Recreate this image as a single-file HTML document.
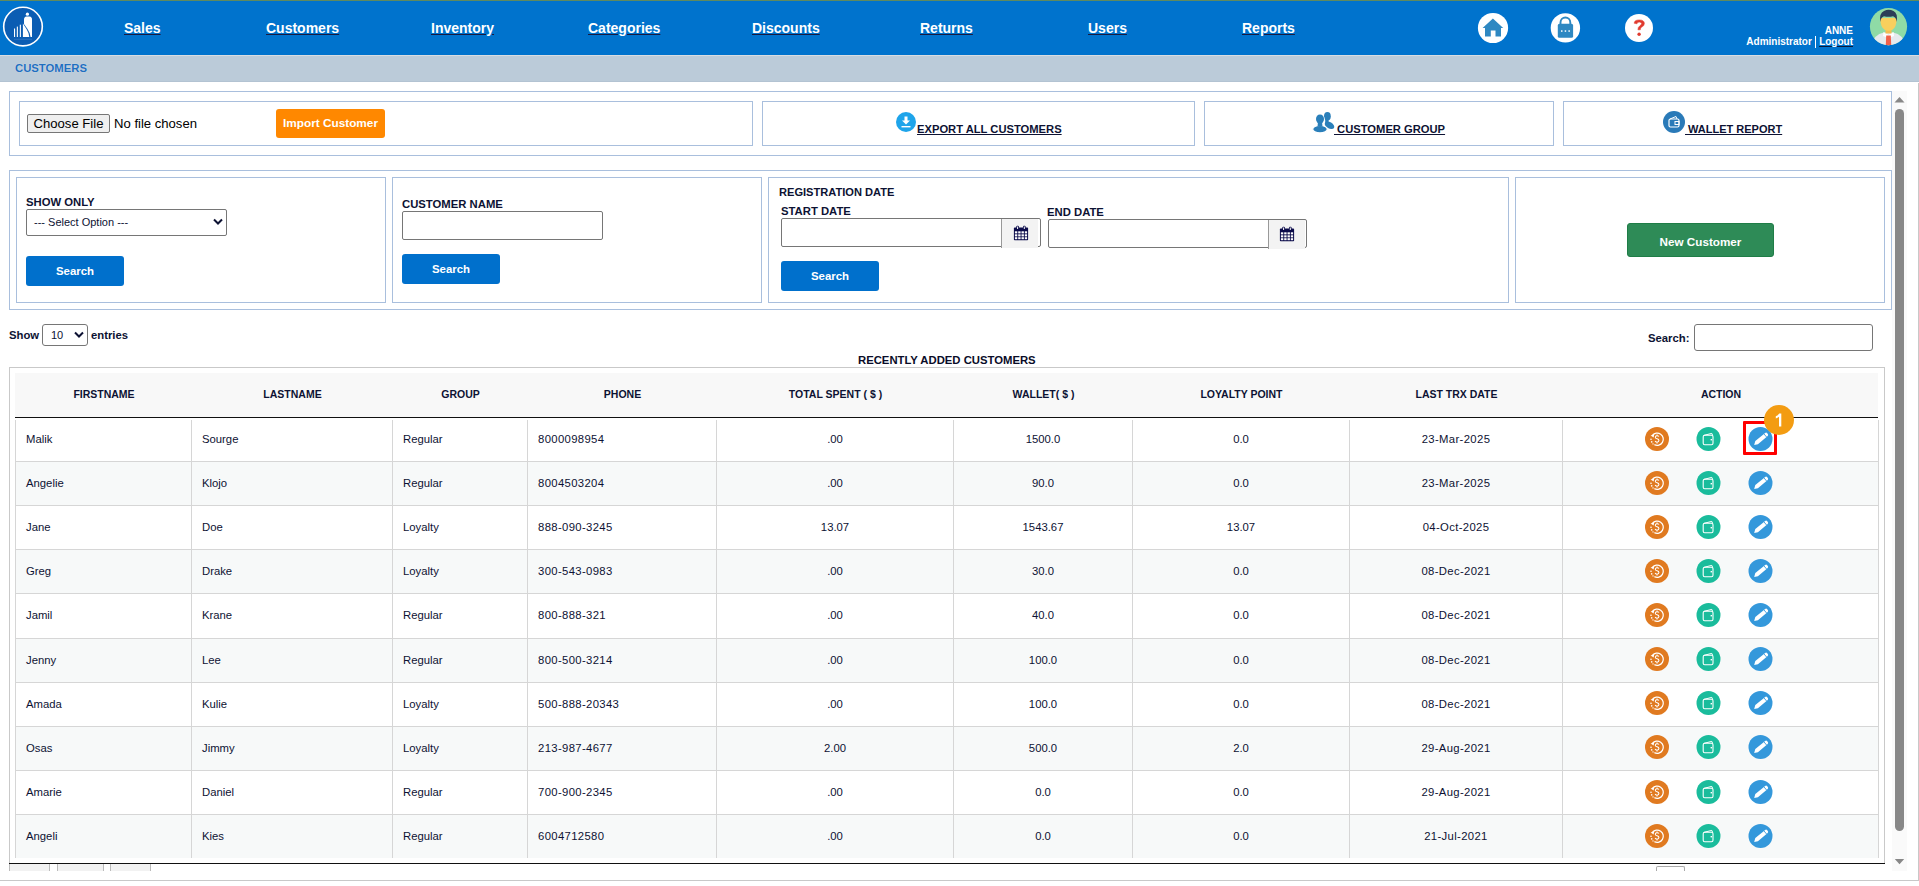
<!DOCTYPE html>
<html><head><meta charset="utf-8">
<style>
*{box-sizing:border-box;margin:0;padding:0}
html,body{width:1919px;height:886px;overflow:hidden;background:#fff;font-family:"Liberation Sans",sans-serif;color:#0d1233}
.a{position:absolute}
#topline{left:0;top:0;width:1919px;height:1px;background:#5f8a5e}
#nav{left:0;top:1px;width:1919px;height:54px;background:#0073cd}
.nv{position:absolute;top:20px;font-size:14px;font-weight:bold;color:#fff;text-decoration:underline;text-decoration-color:#1a1a40;white-space:nowrap;line-height:16px}
#crumb{left:0;top:55px;width:1919px;height:27px;background:#bbcbd9;border-top:1px solid #d9dde2;border-bottom:1px solid #b3c3d2}
#crumb span{position:absolute;left:15px;top:6px;font-size:11.3px;font-weight:bold;color:#1f6fc0;line-height:13px;text-shadow:0 0 1px rgba(255,255,255,0.6)}
.bx{position:absolute;border:1px solid #a9bfdd;background:#fff}
.lbl{position:absolute;font-weight:bold;font-size:11.3px;line-height:13px;white-space:nowrap;color:#0d1233}
.btnb{position:absolute;background:#0070cc;color:#fff;font-weight:bold;font-size:11.4px;border-radius:3px;text-align:center}
.inp{position:absolute;border:1px solid #767676;border-radius:2px;background:#fff}
.th{position:absolute;top:388px;width:200px;text-align:center;font-weight:bold;font-size:10.5px;line-height:13px;color:#0d1233;white-space:nowrap}
.td{position:absolute;font-size:11.3px;line-height:14px;color:#0d1233;white-space:nowrap}
.tc{width:200px;text-align:center}
.lnk{position:absolute;font-weight:bold;font-size:11.2px;text-decoration:underline;color:#0d1233;white-space:nowrap;line-height:13px}
</style></head><body>
<div id="topline" class="a"></div>
<div id="nav" class="a"></div>
<!-- logo -->
<svg class="a" style="left:0;top:0" width="48" height="50" viewBox="0 0 48 50">
 <circle cx="23" cy="26.6" r="19.3" fill="#0b5db3" stroke="#fff" stroke-width="1.6"/>
 <circle cx="27.4" cy="14.2" r="1.6" fill="#fff"/>
 <path d="M24 37 L24 19.5 Q24 16.6 26.5 16.4 L29.5 16.4 Q32 16.6 32 19.5 L32 37 Z" fill="#fff"/>
 <path d="M22.2 21.8 L22.2 37 L30.5 37 Q30.3 33 27.5 29 Q24 24 22.2 21.8 Z" fill="#0b5db3"/>
 <path d="M22.9 23.5 Q24.5 26 26.5 29 Q29 33 29.3 37 L22.9 37 Z" fill="#fff"/>
 <rect x="14" y="28.5" width="1.1" height="8.5" fill="#fff"/>
 <rect x="16.8" y="26.6" width="1.1" height="10.4" fill="#fff"/>
 <rect x="19.8" y="24.7" width="1.1" height="12.3" fill="#fff"/>
 <rect x="14" y="38.8" width="18" height="1" fill="#5b8fd0" opacity="0.4"/>
</svg>
<div class="nv" style="left:124px">Sales</div>
<div class="nv" style="left:266px">Customers</div>
<div class="nv" style="left:431px">Inventory</div>
<div class="nv" style="left:588px">Categories</div>
<div class="nv" style="left:752px">Discounts</div>
<div class="nv" style="left:920px">Returns</div>
<div class="nv" style="left:1088px">Users</div>
<div class="nv" style="left:1242px">Reports</div>
<!-- right icons -->
<svg class="a" style="left:1470px;top:5px" width="190" height="45" viewBox="1470 5 190 45">
 <circle cx="1493" cy="28" r="15.1" fill="#fff"/>
 <path d="M1492.9 18.5 L1482.6 27.9 L1485 27.9 L1485 36.5 L1490.8 36.5 L1490.8 30.5 L1495.5 30.5 L1495.5 36.5 L1501 36.5 L1501 27.9 L1503.2 27.9 Z" fill="#2e88c2"/>
 <circle cx="1565.4" cy="27.9" r="14.7" fill="#fff"/>
 <path d="M1560.5 24 L1560.5 22.4 A4.9 4.9 0 0 1 1570.3 22.4 L1570.3 24" fill="none" stroke="#2e88c2" stroke-width="1.9"/>
 <rect x="1557.8" y="23.8" width="15.3" height="14" rx="1.6" fill="#2e88c2"/>
 <rect x="1561" y="30.3" width="1.5" height="1.5" fill="#fff"/><rect x="1564.7" y="30.3" width="1.5" height="1.5" fill="#fff"/><rect x="1568.4" y="30.3" width="1.5" height="1.5" fill="#fff"/>
 <circle cx="1639" cy="28" r="14" fill="#fff"/>
 <path d="M1634.2 23.3 Q1634.2 19.9 1639.2 19.9 Q1644.4 19.9 1644.4 23.6 Q1644.4 25.8 1641.8 27.1 Q1640.3 27.9 1640.3 29.8 L1637.9 29.8 Q1637.8 27 1639.9 25.7 Q1641.6 24.7 1641.6 23.6 Q1641.6 22.1 1639.2 22.1 Q1637 22.1 1637 23.8 Z" fill="#e03a2e" stroke="#e03a2e" stroke-width="0.5"/>
 <circle cx="1639.1" cy="34.3" r="1.7" fill="#e03a2e"/>
</svg>
<div class="a" style="right:66px;top:25px;font-size:10px;font-weight:bold;color:#fff;text-align:right;line-height:11.3px;white-space:nowrap">ANNE<br>Administrator <span style="display:inline-block;width:1.7px;height:12px;background:#fff;vertical-align:-3px"></span> <u style="text-decoration-color:#0a1a3a">Logout</u></div>
<svg class="a" style="left:1868px;top:6px" width="42" height="42" viewBox="1868 6 42 42">
 <defs><clipPath id="av"><circle cx="1888.5" cy="26.6" r="18.6"/></clipPath></defs>
 <circle cx="1888.5" cy="26.6" r="18.6" fill="#8fdba6"/>
 <g clip-path="url(#av)">
  <path d="M1871 47 Q1873 34.5 1884 32.5 L1893 32.5 Q1904 34.5 1906 47 Z" fill="#e6eaee"/>
  <path d="M1883.5 32 L1888.5 35 L1893.5 32 L1894 36 L1888.5 38 L1883 36 Z" fill="#ffffff"/>
  <rect x="1885.5" y="28" width="6" height="5.5" fill="#f4bd52"/>
  <path d="M1886.2 35.5 L1890.8 35.5 L1891.3 47 L1885.7 47 Z" fill="#f0604a"/>
  <path d="M1880.3 18 Q1880.3 30.5 1888.5 30.8 Q1896.7 30.5 1896.7 18 Z" fill="#f8cf5d"/>
  <path d="M1880.3 22 Q1879 13 1884 11 Q1888.5 8.6 1893.5 11 Q1898 13 1896.7 22 Q1896 17 1893 16.2 Q1888.5 17.5 1884 16.2 Q1881 17 1880.3 22 Z" fill="#2b3d57"/>
 </g>
</svg>

<div id="crumb" class="a"><span>CUSTOMERS</span></div>

<!-- scroll frame -->
<div class="a" style="left:0;top:83px;width:1919px;height:798px;border-right:1px solid #c8c8c8;border-bottom:1px solid #c8c8c8"></div>

<!-- row 1 -->
<div class="bx" style="left:9px;top:91px;width:1883px;height:65px"></div>
<div class="bx" style="left:19px;top:101px;width:734px;height:45px"></div>
<div class="bx" style="left:762px;top:101px;width:433px;height:45px"></div>
<div class="bx" style="left:1204px;top:101px;width:350px;height:45px"></div>
<div class="bx" style="left:1563px;top:101px;width:319px;height:45px"></div>

<div class="a" style="left:27px;top:114px;width:83px;height:19px;border:1px solid #767676;border-radius:2px;background:#efefef;font-size:13.1px;line-height:17px;text-align:center;color:#000">Choose File</div>
<div class="a" style="left:114px;top:115px;font-size:13.1px;line-height:17px;color:#000">No file chosen</div>
<div class="a" style="left:276px;top:109px;width:109px;height:29px;background:#ff8800;border-radius:3px;color:#fff;font-weight:bold;font-size:11.8px;line-height:29px;text-align:center">Import Customer</div>

<svg class="a" style="left:896px;top:112px" width="20" height="20" viewBox="0 0 20 20"><circle cx="10" cy="10" r="10" fill="#1ea4ea"/><path d="M8.5 4.5 h3 v4 h2.5 l-4 4 l-4 -4 h2.5 z" fill="#fff"/><rect x="5.5" y="14" width="9" height="1.4" fill="#fff"/></svg>
<div class="lnk" style="left:917px;top:123px">EXPORT ALL CUSTOMERS</div>

<svg class="a" style="left:1310px;top:108px" width="28" height="28" viewBox="1310 108 28 28">
 <ellipse cx="1327.4" cy="116.2" rx="3.4" ry="4.3" fill="#2a7fba"/>
 <ellipse cx="1329.5" cy="125.3" rx="5.2" ry="3.2" transform="rotate(30 1329.5 125.3)" fill="#2a7fba"/>
 <rect x="1325.2" y="118" width="3.4" height="6" fill="#2a7fba"/>
 <g stroke="#fff" stroke-width="1.3">
 <ellipse cx="1320" cy="119" rx="4" ry="4.6" fill="#2a7fba"/>
 <ellipse cx="1320" cy="129.2" rx="7.3" ry="3.8" fill="#2a7fba"/>
 </g>
 <ellipse cx="1320" cy="119" rx="4" ry="4.6" fill="#2a7fba"/>
 <path d="M1318 122 L1322 122 L1322.5 126.5 L1317.5 126.5 Z" fill="#2a7fba"/>
</svg>
<div class="lnk" style="left:1334px;top:123px">&nbsp;CUSTOMER GROUP</div>

<svg class="a" style="left:1663px;top:111px" width="22" height="22" viewBox="0 0 22 22"><circle cx="11" cy="11" r="11" fill="#2a7ab8"/><rect x="6" y="8" width="10" height="8" rx="1.5" fill="none" stroke="#fff" stroke-width="1.2"/><path d="M7 8 L13 5.5 L14 8" fill="none" stroke="#fff" stroke-width="1"/><rect x="12" y="10.5" width="4" height="3" fill="none" stroke="#fff" stroke-width="1"/></svg>
<div class="lnk" style="left:1685px;top:123px;font-size:11px">&nbsp;WALLET REPORT</div>

<!-- row 2 -->
<div class="bx" style="left:9px;top:170px;width:1883px;height:140px"></div>
<div class="bx" style="left:16px;top:177px;width:370px;height:126px"></div>
<div class="bx" style="left:392px;top:177px;width:370px;height:126px"></div>
<div class="bx" style="left:768px;top:177px;width:741px;height:126px"></div>
<div class="bx" style="left:1515px;top:177px;width:370px;height:126px"></div>

<div class="lbl" style="left:26px;top:196px">SHOW ONLY</div>
<div class="inp" style="left:26px;top:209px;width:201px;height:27px"></div>
<div class="a" style="left:34px;top:216px;font-size:11px;line-height:13px;color:#0d1233">--- Select Option ---</div>
<svg class="a" style="left:213px;top:218px" width="10" height="8" viewBox="0 0 10 8"><path d="M1 1.5 L5 5.5 L9 1.5" fill="none" stroke="#0d1233" stroke-width="2"/></svg>
<div class="btnb" style="left:26px;top:256px;width:98px;height:30px;line-height:30px">Search</div>

<div class="lbl" style="left:402px;top:198px">CUSTOMER NAME</div>
<div class="inp" style="left:402px;top:211px;width:201px;height:29px"></div>
<div class="btnb" style="left:402px;top:254px;width:98px;height:30px;line-height:30px">Search</div>

<div class="lbl" style="left:779px;top:186px;font-size:11.1px">REGISTRATION DATE</div>
<div class="lbl" style="left:781px;top:205px">START DATE</div>
<div class="inp" style="left:781px;top:218px;width:260px;height:29px"></div>
<div class="a" style="left:1001px;top:219px;width:37px;height:29px;background:#f3f3f3;border-left:1px solid #999"></div>
<div class="lbl" style="left:1047px;top:206px">END DATE</div>
<div class="inp" style="left:1048px;top:219px;width:259px;height:29px"></div>
<div class="a" style="left:1268px;top:220px;width:37px;height:29px;background:#f3f3f3;border-left:1px solid #999"></div>
<svg class="a" style="left:1013px;top:225px" width="16" height="16" viewBox="0 0 16 16"><rect x="0.9" y="2.6" width="14.2" height="12.6" rx="0.8" fill="#0b0b4a"/><g fill="#fff"><rect x="1.9" y="6.3" width="2.4" height="2.1"/><rect x="5.2" y="6.3" width="2.4" height="2.1"/><rect x="8.5" y="6.3" width="2.4" height="2.1"/><rect x="11.8" y="6.3" width="2.3" height="2.1"/><rect x="1.9" y="9.3" width="2.4" height="2.1"/><rect x="5.2" y="9.3" width="2.4" height="2.1"/><rect x="8.5" y="9.3" width="2.4" height="2.1"/><rect x="11.8" y="9.3" width="2.3" height="2.1"/><rect x="1.9" y="12.2" width="2.4" height="2"/><rect x="5.2" y="12.2" width="2.4" height="2"/><rect x="8.5" y="12.2" width="2.4" height="2"/><rect x="11.8" y="12.2" width="2.3" height="2"/></g><rect x="3.3" y="0.7" width="2.6" height="3.6" rx="1" fill="#0b0b4a"/><rect x="10" y="0.7" width="2.6" height="3.6" rx="1" fill="#0b0b4a"/><rect x="4.1" y="1.5" width="1" height="2.5" fill="#fff"/><rect x="10.8" y="1.5" width="1" height="2.5" fill="#fff"/></svg>
<svg class="a" style="left:1279px;top:226px" width="16" height="16" viewBox="0 0 16 16"><rect x="0.9" y="2.6" width="14.2" height="12.6" rx="0.8" fill="#0b0b4a"/><g fill="#fff"><rect x="1.9" y="6.3" width="2.4" height="2.1"/><rect x="5.2" y="6.3" width="2.4" height="2.1"/><rect x="8.5" y="6.3" width="2.4" height="2.1"/><rect x="11.8" y="6.3" width="2.3" height="2.1"/><rect x="1.9" y="9.3" width="2.4" height="2.1"/><rect x="5.2" y="9.3" width="2.4" height="2.1"/><rect x="8.5" y="9.3" width="2.4" height="2.1"/><rect x="11.8" y="9.3" width="2.3" height="2.1"/><rect x="1.9" y="12.2" width="2.4" height="2"/><rect x="5.2" y="12.2" width="2.4" height="2"/><rect x="8.5" y="12.2" width="2.4" height="2"/><rect x="11.8" y="12.2" width="2.3" height="2"/></g><rect x="3.3" y="0.7" width="2.6" height="3.6" rx="1" fill="#0b0b4a"/><rect x="10" y="0.7" width="2.6" height="3.6" rx="1" fill="#0b0b4a"/><rect x="4.1" y="1.5" width="1" height="2.5" fill="#fff"/><rect x="10.8" y="1.5" width="1" height="2.5" fill="#fff"/></svg>
<div class="btnb" style="left:781px;top:261px;width:98px;height:30px;line-height:30px">Search</div>

<div class="a" style="left:1627px;top:223px;width:147px;height:34px;background:#2e8b57;border:1px solid #1f7d47;border-radius:3px;color:#fff;font-weight:bold;font-size:11.7px;line-height:33px;padding-top:1px;text-align:center">New Customer</div>

<!-- datatable controls -->
<div class="lbl" style="left:9px;top:329px">Show</div>
<div class="inp" style="left:42px;top:324px;width:46px;height:22px;border-radius:3px"></div>
<div class="a" style="left:51px;top:329px;font-size:11px;line-height:13px">10</div>
<svg class="a" style="left:74px;top:331px" width="10" height="8" viewBox="0 0 10 8"><path d="M1 1.5 L5 5.5 L9 1.5" fill="none" stroke="#0d1233" stroke-width="2"/></svg>
<div class="lbl" style="left:91px;top:329px">entries</div>
<div class="lbl" style="left:1648px;top:332px">Search:</div>
<div class="inp" style="left:1694px;top:324px;width:179px;height:27px;border-radius:3px"></div>
<div class="lbl" style="left:858px;top:354px;color:#0a0c28">RECENTLY ADDED CUSTOMERS</div>

<svg width="0" height="0" style="position:absolute">
<defs>
<symbol id="ic-refund" viewBox="0 0 24 24"><circle cx="12" cy="12" r="12" fill="#e07a20"/><path d="M7.4 8.4 A6.1 6.1 0 1 1 9.4 17.6" fill="none" stroke="#fff" stroke-width="1.25"/><path d="M5.6 8.6 L9.2 7.2 L8.6 10.6 Z" fill="#fff"/><circle cx="6" cy="12.3" r="0.8" fill="#fff"/><circle cx="6.7" cy="14.9" r="0.8" fill="#fff"/><circle cx="8" cy="16.9" r="0.7" fill="#fff"/><path d="M13.9 9.6 Q13.4 8.7 12.1 8.7 Q10.3 8.7 10.3 10.2 Q10.3 11.4 12.1 11.8 Q13.9 12.2 13.9 13.6 Q13.9 15.2 12 15.2 Q10.6 15.2 10.1 14.1 M12.05 7.4 V8.7 M12.05 15.2 V16.5" fill="none" stroke="#fff" stroke-width="1.1"/></symbol>
<symbol id="ic-wallet" viewBox="0 0 25 24"><circle cx="12.5" cy="12" r="12" fill="#1abc9c"/><rect x="7.2" y="8.3" width="9.8" height="9.4" rx="1.5" fill="none" stroke="#fff" stroke-width="1.1"/><path d="M8 8.3 L15.8 6.4 L16.6 8.3" fill="none" stroke="#fff" stroke-width="1" stroke-linejoin="round"/><rect x="14.6" y="12" width="1.4" height="1.4" fill="#fff"/></symbol>
<symbol id="ic-edit" viewBox="0 0 25 24"><circle cx="12.5" cy="12" r="12" fill="#3498db"/><path d="M6.2 17.9 L7.3 14.1 L17.2 5.9 Q18.3 5.2 19.2 6.2 L19.9 7.1 Q20.5 8 19.7 8.9 L9.9 17.2 Z" fill="#fff"/><path d="M16 7 L18.6 10" stroke="#3498db" stroke-width="0.9"/></symbol>
</defs></svg>
<div class="a" style="left:9px;top:367px;width:1876px;height:497px;border:1px solid #c9c9c9;border-bottom:none"></div>
<div class="a" style="left:9px;top:863px;width:1876px;height:1px;background:#111"></div>
<div class="a" style="left:15px;top:373px;width:1863px;height:44px;background:#f8f8f8"></div>
<div class="a" style="left:15px;top:417px;width:1863px;height:1px;background:#111"></div>
<div class="th" style="left:4.0px">FIRSTNAME</div>
<div class="th" style="left:192.5px">LASTNAME</div>
<div class="th" style="left:360.5px">GROUP</div>
<div class="th" style="left:522.5px">PHONE</div>
<div class="th" style="left:735.5px">TOTAL SPENT ( $ )</div>
<div class="th" style="left:943.5px">WALLET( $ )</div>
<div class="th" style="left:1141.5px">LOYALTY POINT</div>
<div class="th" style="left:1356.5px">LAST TRX DATE</div>
<div class="th" style="left:1621.0px">ACTION</div>
<div class="a" style="left:15px;top:418px;width:1863px;height:43px;background:#fff"></div>
<div class="a" style="left:15px;top:461px;width:1863px;height:1px;background:#d6d6d6"></div>
<div class="td" style="left:26px;top:431.5px">Malik</div>
<div class="td" style="left:202px;top:431.5px">Sourge</div>
<div class="td" style="left:403px;top:431.5px">Regular</div>
<div class="td" style="left:538px;top:431.5px;letter-spacing:0.35px">8000098954</div>
<div class="td tc" style="left:735.0px;top:431.5px">.00</div>
<div class="td tc" style="left:943.0px;top:431.5px">1500.0</div>
<div class="td tc" style="left:1141.0px;top:431.5px">0.0</div>
<div class="td tc" style="left:1356.0px;top:431.5px;letter-spacing:0.35px">23-Mar-2025</div>
<svg class="a ic" style="left:1645px;top:426.7px" width="24" height="24" viewBox="0 0 24 24"><use href="#ic-refund"/></svg>
<svg class="a ic" style="left:1696px;top:426.7px" width="25" height="24" viewBox="0 0 25 24"><use href="#ic-wallet"/></svg>
<svg class="a ic" style="left:1748px;top:426.7px" width="25" height="24" viewBox="0 0 25 24"><use href="#ic-edit"/></svg>
<div class="a" style="left:15px;top:462px;width:1863px;height:43px;background:#f7f9f9"></div>
<div class="a" style="left:15px;top:505px;width:1863px;height:1px;background:#d6d6d6"></div>
<div class="td" style="left:26px;top:475.5px">Angelie</div>
<div class="td" style="left:202px;top:475.5px">Klojo</div>
<div class="td" style="left:403px;top:475.5px">Regular</div>
<div class="td" style="left:538px;top:475.5px;letter-spacing:0.35px">8004503204</div>
<div class="td tc" style="left:735.0px;top:475.5px">.00</div>
<div class="td tc" style="left:943.0px;top:475.5px">90.0</div>
<div class="td tc" style="left:1141.0px;top:475.5px">0.0</div>
<div class="td tc" style="left:1356.0px;top:475.5px;letter-spacing:0.35px">23-Mar-2025</div>
<svg class="a ic" style="left:1645px;top:470.8px" width="24" height="24" viewBox="0 0 24 24"><use href="#ic-refund"/></svg>
<svg class="a ic" style="left:1696px;top:470.8px" width="25" height="24" viewBox="0 0 25 24"><use href="#ic-wallet"/></svg>
<svg class="a ic" style="left:1748px;top:470.8px" width="25" height="24" viewBox="0 0 25 24"><use href="#ic-edit"/></svg>
<div class="a" style="left:15px;top:506px;width:1863px;height:43px;background:#fff"></div>
<div class="a" style="left:15px;top:549px;width:1863px;height:1px;background:#d6d6d6"></div>
<div class="td" style="left:26px;top:519.5px">Jane</div>
<div class="td" style="left:202px;top:519.5px">Doe</div>
<div class="td" style="left:403px;top:519.5px">Loyalty</div>
<div class="td" style="left:538px;top:519.5px;letter-spacing:0.35px">888-090-3245</div>
<div class="td tc" style="left:735.0px;top:519.5px">13.07</div>
<div class="td tc" style="left:943.0px;top:519.5px">1543.67</div>
<div class="td tc" style="left:1141.0px;top:519.5px">13.07</div>
<div class="td tc" style="left:1356.0px;top:519.5px;letter-spacing:0.35px">04-Oct-2025</div>
<svg class="a ic" style="left:1645px;top:514.9px" width="24" height="24" viewBox="0 0 24 24"><use href="#ic-refund"/></svg>
<svg class="a ic" style="left:1696px;top:514.9px" width="25" height="24" viewBox="0 0 25 24"><use href="#ic-wallet"/></svg>
<svg class="a ic" style="left:1748px;top:514.9px" width="25" height="24" viewBox="0 0 25 24"><use href="#ic-edit"/></svg>
<div class="a" style="left:15px;top:550px;width:1863px;height:43px;background:#f7f9f9"></div>
<div class="a" style="left:15px;top:593px;width:1863px;height:1px;background:#d6d6d6"></div>
<div class="td" style="left:26px;top:563.5px">Greg</div>
<div class="td" style="left:202px;top:563.5px">Drake</div>
<div class="td" style="left:403px;top:563.5px">Loyalty</div>
<div class="td" style="left:538px;top:563.5px;letter-spacing:0.35px">300-543-0983</div>
<div class="td tc" style="left:735.0px;top:563.5px">.00</div>
<div class="td tc" style="left:943.0px;top:563.5px">30.0</div>
<div class="td tc" style="left:1141.0px;top:563.5px">0.0</div>
<div class="td tc" style="left:1356.0px;top:563.5px;letter-spacing:0.35px">08-Dec-2021</div>
<svg class="a ic" style="left:1645px;top:559.0px" width="24" height="24" viewBox="0 0 24 24"><use href="#ic-refund"/></svg>
<svg class="a ic" style="left:1696px;top:559.0px" width="25" height="24" viewBox="0 0 25 24"><use href="#ic-wallet"/></svg>
<svg class="a ic" style="left:1748px;top:559.0px" width="25" height="24" viewBox="0 0 25 24"><use href="#ic-edit"/></svg>
<div class="a" style="left:15px;top:594px;width:1863px;height:44px;background:#fff"></div>
<div class="a" style="left:15px;top:638px;width:1863px;height:1px;background:#d6d6d6"></div>
<div class="td" style="left:26px;top:608.0px">Jamil</div>
<div class="td" style="left:202px;top:608.0px">Krane</div>
<div class="td" style="left:403px;top:608.0px">Regular</div>
<div class="td" style="left:538px;top:608.0px;letter-spacing:0.35px">800-888-321</div>
<div class="td tc" style="left:735.0px;top:608.0px">.00</div>
<div class="td tc" style="left:943.0px;top:608.0px">40.0</div>
<div class="td tc" style="left:1141.0px;top:608.0px">0.0</div>
<div class="td tc" style="left:1356.0px;top:608.0px;letter-spacing:0.35px">08-Dec-2021</div>
<svg class="a ic" style="left:1645px;top:603.1px" width="24" height="24" viewBox="0 0 24 24"><use href="#ic-refund"/></svg>
<svg class="a ic" style="left:1696px;top:603.1px" width="25" height="24" viewBox="0 0 25 24"><use href="#ic-wallet"/></svg>
<svg class="a ic" style="left:1748px;top:603.1px" width="25" height="24" viewBox="0 0 25 24"><use href="#ic-edit"/></svg>
<div class="a" style="left:15px;top:639px;width:1863px;height:43px;background:#f7f9f9"></div>
<div class="a" style="left:15px;top:682px;width:1863px;height:1px;background:#d6d6d6"></div>
<div class="td" style="left:26px;top:652.5px">Jenny</div>
<div class="td" style="left:202px;top:652.5px">Lee</div>
<div class="td" style="left:403px;top:652.5px">Regular</div>
<div class="td" style="left:538px;top:652.5px;letter-spacing:0.35px">800-500-3214</div>
<div class="td tc" style="left:735.0px;top:652.5px">.00</div>
<div class="td tc" style="left:943.0px;top:652.5px">100.0</div>
<div class="td tc" style="left:1141.0px;top:652.5px">0.0</div>
<div class="td tc" style="left:1356.0px;top:652.5px;letter-spacing:0.35px">08-Dec-2021</div>
<svg class="a ic" style="left:1645px;top:647.2px" width="24" height="24" viewBox="0 0 24 24"><use href="#ic-refund"/></svg>
<svg class="a ic" style="left:1696px;top:647.2px" width="25" height="24" viewBox="0 0 25 24"><use href="#ic-wallet"/></svg>
<svg class="a ic" style="left:1748px;top:647.2px" width="25" height="24" viewBox="0 0 25 24"><use href="#ic-edit"/></svg>
<div class="a" style="left:15px;top:683px;width:1863px;height:43px;background:#fff"></div>
<div class="a" style="left:15px;top:726px;width:1863px;height:1px;background:#d6d6d6"></div>
<div class="td" style="left:26px;top:696.5px">Amada</div>
<div class="td" style="left:202px;top:696.5px">Kulie</div>
<div class="td" style="left:403px;top:696.5px">Loyalty</div>
<div class="td" style="left:538px;top:696.5px;letter-spacing:0.35px">500-888-20343</div>
<div class="td tc" style="left:735.0px;top:696.5px">.00</div>
<div class="td tc" style="left:943.0px;top:696.5px">100.0</div>
<div class="td tc" style="left:1141.0px;top:696.5px">0.0</div>
<div class="td tc" style="left:1356.0px;top:696.5px;letter-spacing:0.35px">08-Dec-2021</div>
<svg class="a ic" style="left:1645px;top:691.3px" width="24" height="24" viewBox="0 0 24 24"><use href="#ic-refund"/></svg>
<svg class="a ic" style="left:1696px;top:691.3px" width="25" height="24" viewBox="0 0 25 24"><use href="#ic-wallet"/></svg>
<svg class="a ic" style="left:1748px;top:691.3px" width="25" height="24" viewBox="0 0 25 24"><use href="#ic-edit"/></svg>
<div class="a" style="left:15px;top:727px;width:1863px;height:43px;background:#f7f9f9"></div>
<div class="a" style="left:15px;top:770px;width:1863px;height:1px;background:#d6d6d6"></div>
<div class="td" style="left:26px;top:740.5px">Osas</div>
<div class="td" style="left:202px;top:740.5px">Jimmy</div>
<div class="td" style="left:403px;top:740.5px">Loyalty</div>
<div class="td" style="left:538px;top:740.5px;letter-spacing:0.35px">213-987-4677</div>
<div class="td tc" style="left:735.0px;top:740.5px">2.00</div>
<div class="td tc" style="left:943.0px;top:740.5px">500.0</div>
<div class="td tc" style="left:1141.0px;top:740.5px">2.0</div>
<div class="td tc" style="left:1356.0px;top:740.5px;letter-spacing:0.35px">29-Aug-2021</div>
<svg class="a ic" style="left:1645px;top:735.4px" width="24" height="24" viewBox="0 0 24 24"><use href="#ic-refund"/></svg>
<svg class="a ic" style="left:1696px;top:735.4px" width="25" height="24" viewBox="0 0 25 24"><use href="#ic-wallet"/></svg>
<svg class="a ic" style="left:1748px;top:735.4px" width="25" height="24" viewBox="0 0 25 24"><use href="#ic-edit"/></svg>
<div class="a" style="left:15px;top:771px;width:1863px;height:43px;background:#fff"></div>
<div class="a" style="left:15px;top:814px;width:1863px;height:1px;background:#d6d6d6"></div>
<div class="td" style="left:26px;top:784.5px">Amarie</div>
<div class="td" style="left:202px;top:784.5px">Daniel</div>
<div class="td" style="left:403px;top:784.5px">Regular</div>
<div class="td" style="left:538px;top:784.5px;letter-spacing:0.35px">700-900-2345</div>
<div class="td tc" style="left:735.0px;top:784.5px">.00</div>
<div class="td tc" style="left:943.0px;top:784.5px">0.0</div>
<div class="td tc" style="left:1141.0px;top:784.5px">0.0</div>
<div class="td tc" style="left:1356.0px;top:784.5px;letter-spacing:0.35px">29-Aug-2021</div>
<svg class="a ic" style="left:1645px;top:779.5px" width="24" height="24" viewBox="0 0 24 24"><use href="#ic-refund"/></svg>
<svg class="a ic" style="left:1696px;top:779.5px" width="25" height="24" viewBox="0 0 25 24"><use href="#ic-wallet"/></svg>
<svg class="a ic" style="left:1748px;top:779.5px" width="25" height="24" viewBox="0 0 25 24"><use href="#ic-edit"/></svg>
<div class="a" style="left:15px;top:815px;width:1863px;height:43px;background:#f7f9f9"></div>
<div class="td" style="left:26px;top:828.5px">Angeli</div>
<div class="td" style="left:202px;top:828.5px">Kies</div>
<div class="td" style="left:403px;top:828.5px">Regular</div>
<div class="td" style="left:538px;top:828.5px;letter-spacing:0.35px">6004712580</div>
<div class="td tc" style="left:735.0px;top:828.5px">.00</div>
<div class="td tc" style="left:943.0px;top:828.5px">0.0</div>
<div class="td tc" style="left:1141.0px;top:828.5px">0.0</div>
<div class="td tc" style="left:1356.0px;top:828.5px;letter-spacing:0.35px">21-Jul-2021</div>
<svg class="a ic" style="left:1645px;top:823.6px" width="24" height="24" viewBox="0 0 24 24"><use href="#ic-refund"/></svg>
<svg class="a ic" style="left:1696px;top:823.6px" width="25" height="24" viewBox="0 0 25 24"><use href="#ic-wallet"/></svg>
<svg class="a ic" style="left:1748px;top:823.6px" width="25" height="24" viewBox="0 0 25 24"><use href="#ic-edit"/></svg>
<div class="a" style="left:15px;top:420px;width:1px;height:438px;background:#d6d6d6"></div>
<div class="a" style="left:191px;top:420px;width:1px;height:438px;background:#d6d6d6"></div>
<div class="a" style="left:392px;top:420px;width:1px;height:438px;background:#d6d6d6"></div>
<div class="a" style="left:527px;top:420px;width:1px;height:438px;background:#d6d6d6"></div>
<div class="a" style="left:716px;top:420px;width:1px;height:438px;background:#d6d6d6"></div>
<div class="a" style="left:953px;top:420px;width:1px;height:438px;background:#d6d6d6"></div>
<div class="a" style="left:1132px;top:420px;width:1px;height:438px;background:#d6d6d6"></div>
<div class="a" style="left:1349px;top:420px;width:1px;height:438px;background:#d6d6d6"></div>
<div class="a" style="left:1562px;top:420px;width:1px;height:438px;background:#d6d6d6"></div>
<div class="a" style="left:1878px;top:420px;width:1px;height:438px;background:#d6d6d6"></div>

<!-- highlight -->
<div class="a" style="left:1743px;top:421px;width:34px;height:34px;border:3px solid #ff0000;border-radius:1px"></div>
<svg class="a" style="left:1764px;top:405px" width="30" height="30" viewBox="0 0 30 30"><circle cx="15" cy="15" r="15" fill="#f39c12"/><path d="M15.2 8.5 L17.3 8.5 L17.3 21.5 L15 21.5 L15 11.8 Q13.6 13 11.8 13.4 L11.8 11.3 Q14 10.6 15.2 8.5 Z" fill="#fff"/></svg>
<!-- pagination clipped -->
<div class="a" style="left:9px;top:864px;width:41px;height:7px;border:1px solid #bbb;border-top:none;border-bottom:none;background:#f2f2f2"></div>
<div class="a" style="left:57px;top:864px;width:47px;height:7px;border:1px solid #bbb;border-top:none;border-bottom:none;background:#f2f2f2"></div>
<div class="a" style="left:110px;top:864px;width:41px;height:7px;border:1px solid #bbb;border-top:none;border-bottom:none;background:#f2f2f2"></div>
<div class="a" style="left:1656px;top:866px;width:29px;height:5px;border:1px solid #aaa;border-bottom:none;border-radius:2px 2px 0 0"></div>
<!-- white bottom strip -->
<div class="a" style="left:0;top:871px;width:1918px;height:9px;background:#fff"></div>
<!-- scrollbar -->
<div class="a" style="left:1892px;top:91px;width:15px;height:780px;background:#fafafa"></div>
<svg class="a" style="left:1892px;top:91px" width="15" height="780" viewBox="0 0 15 780"><path d="M2.5 11.5 L7.5 6 L12.5 11.5 Z" fill="#888"/><rect x="3" y="18" width="9" height="722" rx="4.5" fill="#888"/><path d="M2.8 768 L7.5 773.2 L12.2 768 Z" fill="#888"/></svg>
</body></html>
